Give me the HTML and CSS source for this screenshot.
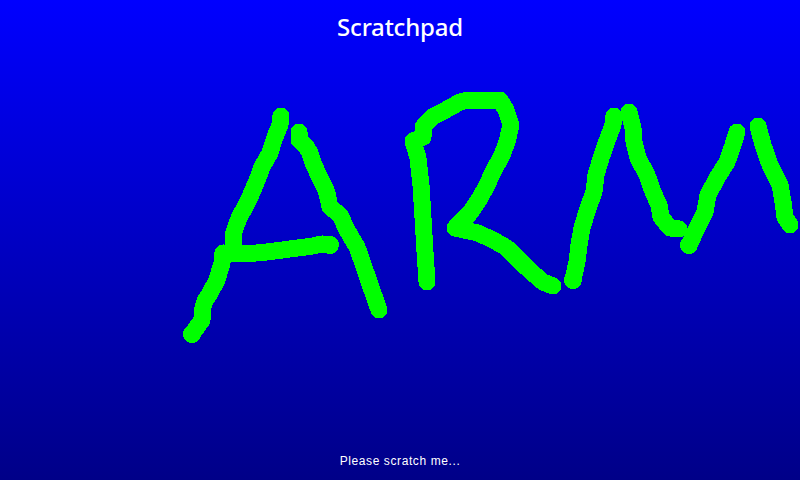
FILE: index.html
```html
<!DOCTYPE html>
<html lang="en">
<head>
<meta charset="utf-8">
<title>Scratchpad</title>
<link rel="stylesheet" href="styles.css">
</head>
<body>
<main class="pad">
  <h1 class="title">Scratchpad</h1>
  <svg class="ink" viewBox="0 0 800 480" width="800" height="480" aria-hidden="true">
    <polyline points="281,116 280,125 275,137 272,146 270,153 262,167 258,178 253,190 249,199 245,207 240,216 237,223 234,232 233,240 233,250"/>
    <polyline points="223,253 222,263 219,273 217,280 210,293 205,301 203,307 202,320 197,327 192,334"/>
    <polyline points="223,253 245,254 267,252 290,249 313,246 322,244 330,245"/>
    <polyline points="299,132 299,140 306,146 310,153 313,163 320,178 325,188 327,193 330,207 340,215 347,230 357,247 361,258 365,270 373,293 379,310"/>
    <polyline points="427,282 425,252 423,218 421,185 418,158 413,141 423,137 423,127 432,117 442,112 460,102 468,100 500,100 506,110 511,125 507,142 502,155 493,172 487,185 480,198 470,213 455,228 478,233 493,240 507,248 527,268 543,282 553,286"/>
    <polyline points="573,280 577,262 579,245 582,228 588,208 594,192 596,175 601,158 608,138 613,125 614,116"/>
    <polyline points="629,112 633,128 634,142 638,158 647,175 653,192 659,205 661,217 670,228 679,229"/>
    <polyline points="689,245 697,228 705,212 708,195 717,178 727,162 733,145 737,132"/>
    <polyline points="758,126 763,145 770,165 780,185 783,202 785,217 790,225"/>
    <circle cx="192" cy="334" r="9"/>
    <circle cx="330" cy="245" r="9"/>
    <circle cx="573" cy="280" r="9"/>
    <circle cx="689" cy="245" r="9"/>
  </svg>
  <p class="hint">Please scratch me...</p>
</main>
</body>
</html>
```
FILE: styles.css
```css
* { box-sizing: border-box; }
html, body { margin: 0; padding: 0; }
body { width: 800px; height: 480px; overflow: hidden; }
.pad {
  position: relative;
  width: 800px;
  height: 480px;
  display: flex;
  flex-direction: column;
  align-items: center;
  justify-content: space-between;
  padding: 11px 0 12px;
  background: linear-gradient(to bottom, #0000ff 0%, #000088 100%);
  color: #fff;
}
.title {
  margin: 0;
  font: 500 24px/32px "Noto Sans", sans-serif;
  letter-spacing: -0.2px;
}
.hint {
  margin: 0;
  font: 400 12px/14px "Liberation Sans", sans-serif;
  letter-spacing: 0.6px;
}
.ink {
  position: absolute;
  left: 0;
  top: 0;
  shape-rendering: crispEdges;
}
.ink polyline {
  fill: none;
  stroke: #00ff00;
  stroke-width: 17;
  stroke-linecap: round;
  stroke-linejoin: round;
}
.ink circle {
  fill: #00ff00;
}
```
